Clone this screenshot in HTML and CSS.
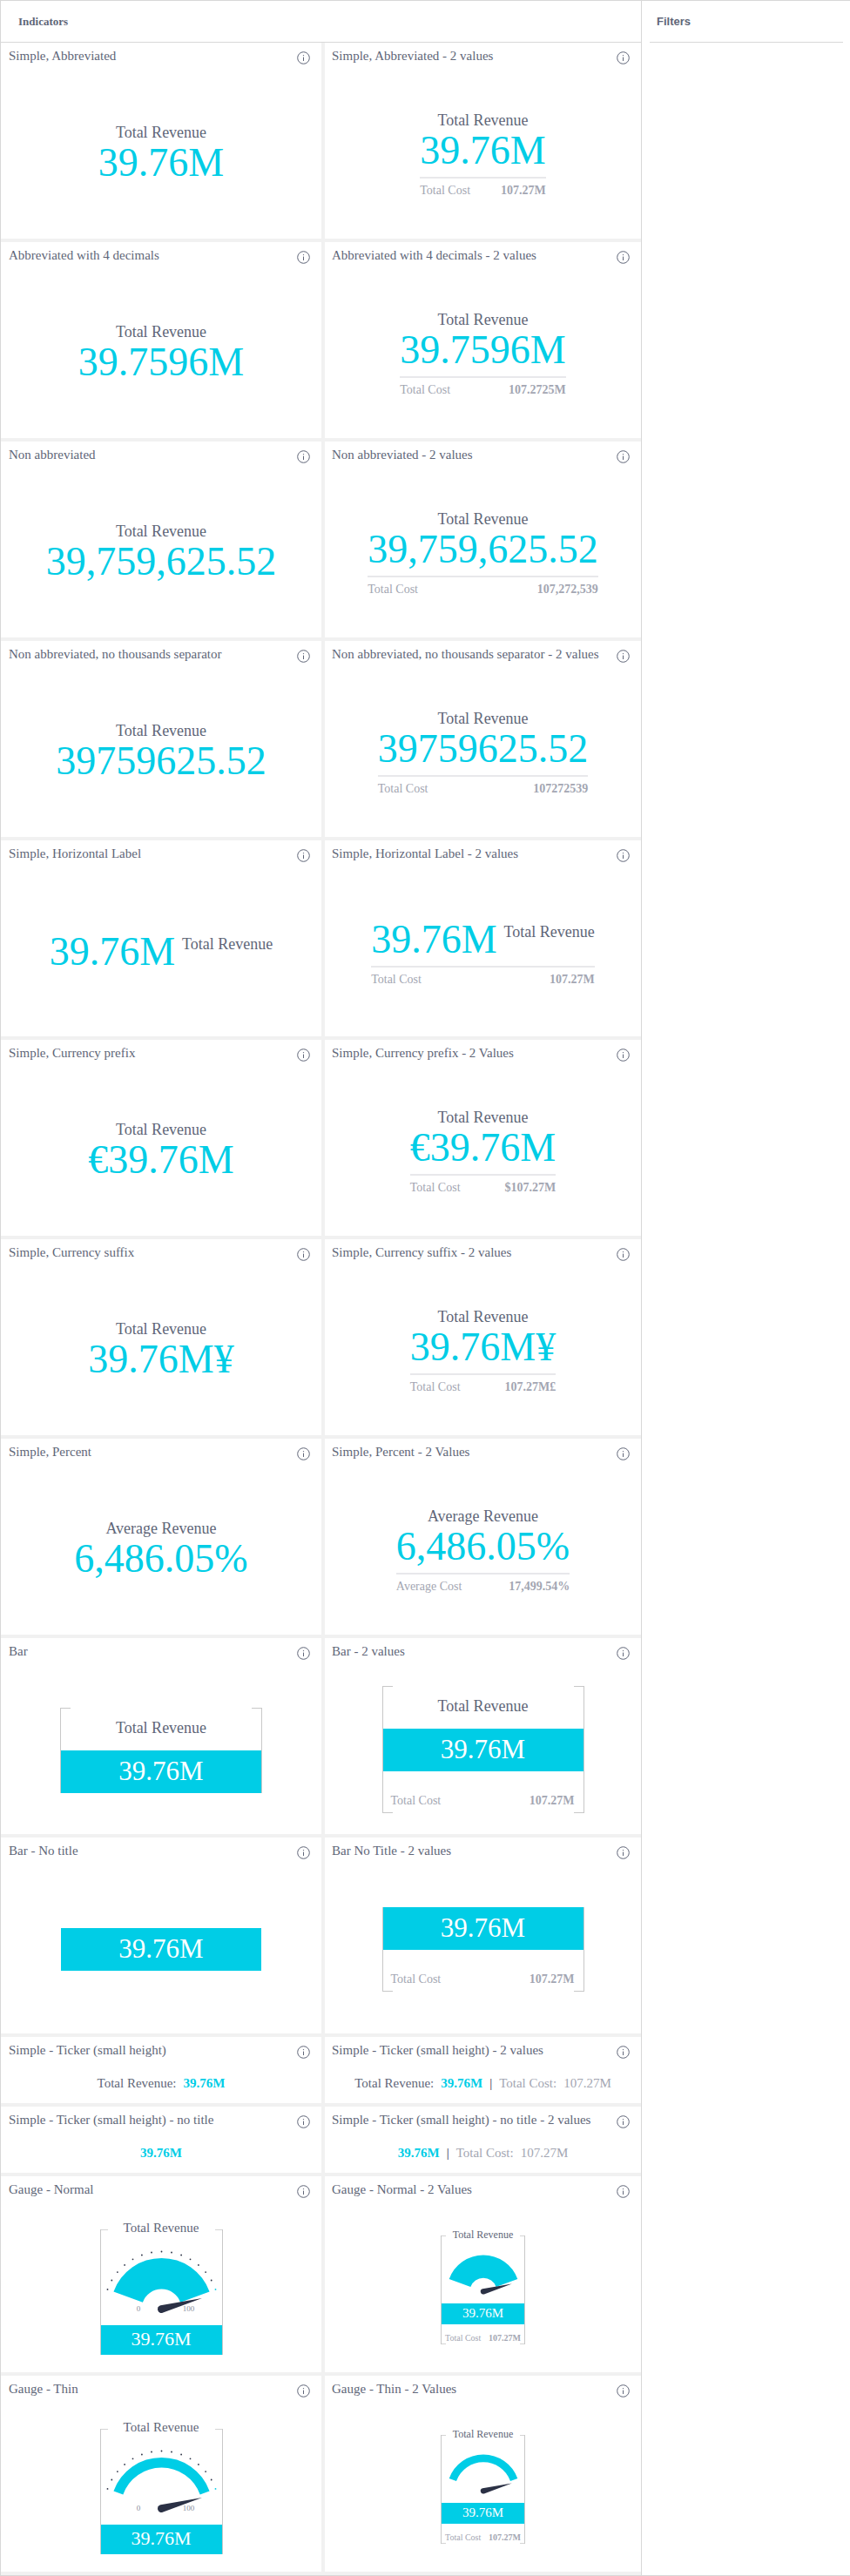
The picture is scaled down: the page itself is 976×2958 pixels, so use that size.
FILE: index.html
```html
<!DOCTYPE html>
<html lang="en">
<head>
    <meta charset="UTF-8">
    <title>Indicators</title>
    <link rel="stylesheet" href="styles.css">
</head>
<body>
    <svg class="defs" width="0" height="0">
        <symbol id="info" viewBox="0 0 15 15">
            <circle cx="7.5" cy="7.5" r="6.8" fill="none" stroke="currentColor" stroke-width="1"/>
            <path d="M7.5 6.6v4.4" stroke="currentColor" stroke-width="1"/>
            <circle cx="7.5" cy="4.6" r=".7" fill="currentColor"/>
        </symbol>
        <symbol id="ticks" viewBox="0 0 139 110">
            <g fill="#2b3145">
                <circle cx="7.5" cy="68.9" r=".9"/><circle cx="12.3" cy="58.5" r=".9"/>
                <circle cx="18.9" cy="49.1" r=".9"/><circle cx="27.1" cy="40.9" r=".9"/>
                <circle cx="36.5" cy="34.3" r=".9"/><circle cx="46.9" cy="29.5" r=".9"/>
                <circle cx="58" cy="26.5" r=".9"/><circle cx="69.5" cy="25.5" r=".9"/>
                <circle cx="81" cy="26.5" r=".9"/><circle cx="92.1" cy="29.5" r=".9"/>
                <circle cx="102.5" cy="34.3" r=".9"/><circle cx="111.9" cy="40.9" r=".9"/>
                <circle cx="120.1" cy="49.1" r=".9"/><circle cx="126.7" cy="58.5" r=".9"/>
            </g>
            <circle cx="131.5" cy="68.9" r=".9" fill="#00cde6"/>
        </symbol>
    </svg>

    <div class="page">
        <main class="main">
            <header class="main-head">Indicators</header>
            <div class="grid">

                <section class="card">
                    <div class="card-title"><span>Simple, Abbreviated</span><svg class="info"><use href="#info"/></svg></div>
                    <div class="card-body">
                        <div class="kpi">
                            <div class="kpi-label">Total Revenue</div>
                            <div class="kpi-value">39.76M</div>
                        </div>
                    </div>
                </section>
                <section class="card">
                    <div class="card-title"><span>Simple, Abbreviated - 2 values</span><svg class="info"><use href="#info"/></svg></div>
                    <div class="card-body">
                        <div class="kpi kpi-two">
                            <div class="kpi-label">Total Revenue</div>
                            <div class="kpi-value">39.76M</div>
                            <div class="kpi-rule"></div>
                            <div class="kpi-sub"><span>Total Cost</span><b>107.27M</b></div>
                        </div>
                    </div>
                </section>

                <section class="card">
                    <div class="card-title"><span>Abbreviated with 4 decimals</span><svg class="info"><use href="#info"/></svg></div>
                    <div class="card-body">
                        <div class="kpi">
                            <div class="kpi-label">Total Revenue</div>
                            <div class="kpi-value">39.7596M</div>
                        </div>
                    </div>
                </section>
                <section class="card">
                    <div class="card-title"><span>Abbreviated with 4 decimals - 2 values</span><svg class="info"><use href="#info"/></svg></div>
                    <div class="card-body">
                        <div class="kpi kpi-two">
                            <div class="kpi-label">Total Revenue</div>
                            <div class="kpi-value">39.7596M</div>
                            <div class="kpi-rule"></div>
                            <div class="kpi-sub"><span>Total Cost</span><b>107.2725M</b></div>
                        </div>
                    </div>
                </section>

                <section class="card">
                    <div class="card-title"><span>Non abbreviated</span><svg class="info"><use href="#info"/></svg></div>
                    <div class="card-body">
                        <div class="kpi">
                            <div class="kpi-label">Total Revenue</div>
                            <div class="kpi-value">39,759,625.52</div>
                        </div>
                    </div>
                </section>
                <section class="card">
                    <div class="card-title"><span>Non abbreviated - 2 values</span><svg class="info"><use href="#info"/></svg></div>
                    <div class="card-body">
                        <div class="kpi kpi-two">
                            <div class="kpi-label">Total Revenue</div>
                            <div class="kpi-value">39,759,625.52</div>
                            <div class="kpi-rule"></div>
                            <div class="kpi-sub"><span>Total Cost</span><b>107,272,539</b></div>
                        </div>
                    </div>
                </section>

                <section class="card">
                    <div class="card-title"><span>Non abbreviated, no thousands separator</span><svg class="info"><use href="#info"/></svg></div>
                    <div class="card-body">
                        <div class="kpi">
                            <div class="kpi-label">Total Revenue</div>
                            <div class="kpi-value">39759625.52</div>
                        </div>
                    </div>
                </section>
                <section class="card">
                    <div class="card-title"><span>Non abbreviated, no thousands separator - 2 values</span><svg class="info"><use href="#info"/></svg></div>
                    <div class="card-body">
                        <div class="kpi kpi-two">
                            <div class="kpi-label">Total Revenue</div>
                            <div class="kpi-value">39759625.52</div>
                            <div class="kpi-rule"></div>
                            <div class="kpi-sub"><span>Total Cost</span><b>107272539</b></div>
                        </div>
                    </div>
                </section>

                <section class="card">
                    <div class="card-title"><span>Simple, Horizontal Label</span><svg class="info"><use href="#info"/></svg></div>
                    <div class="card-body">
                        <div class="kpi">
                            <div class="kpi-row">
                                <div class="kpi-value">39.76M</div>
                                <div class="kpi-label">Total Revenue</div>
                            </div>
                        </div>
                    </div>
                </section>
                <section class="card">
                    <div class="card-title"><span>Simple, Horizontal Label - 2 values</span><svg class="info"><use href="#info"/></svg></div>
                    <div class="card-body">
                        <div class="kpi kpi-two">
                            <div class="kpi-row">
                                <div class="kpi-value">39.76M</div>
                                <div class="kpi-label">Total Revenue</div>
                            </div>
                            <div class="kpi-rule"></div>
                            <div class="kpi-sub"><span>Total Cost</span><b>107.27M</b></div>
                        </div>
                    </div>
                </section>

                <section class="card">
                    <div class="card-title"><span>Simple, Currency prefix</span><svg class="info"><use href="#info"/></svg></div>
                    <div class="card-body">
                        <div class="kpi">
                            <div class="kpi-label">Total Revenue</div>
                            <div class="kpi-value">€39.76M</div>
                        </div>
                    </div>
                </section>
                <section class="card">
                    <div class="card-title"><span>Simple, Currency prefix - 2 Values</span><svg class="info"><use href="#info"/></svg></div>
                    <div class="card-body">
                        <div class="kpi kpi-two">
                            <div class="kpi-label">Total Revenue</div>
                            <div class="kpi-value">€39.76M</div>
                            <div class="kpi-rule"></div>
                            <div class="kpi-sub"><span>Total Cost</span><b>$107.27M</b></div>
                        </div>
                    </div>
                </section>

                <section class="card">
                    <div class="card-title"><span>Simple, Currency suffix</span><svg class="info"><use href="#info"/></svg></div>
                    <div class="card-body">
                        <div class="kpi">
                            <div class="kpi-label">Total Revenue</div>
                            <div class="kpi-value">39.76M¥</div>
                        </div>
                    </div>
                </section>
                <section class="card">
                    <div class="card-title"><span>Simple, Currency suffix - 2 values</span><svg class="info"><use href="#info"/></svg></div>
                    <div class="card-body">
                        <div class="kpi kpi-two">
                            <div class="kpi-label">Total Revenue</div>
                            <div class="kpi-value">39.76M¥</div>
                            <div class="kpi-rule"></div>
                            <div class="kpi-sub"><span>Total Cost</span><b>107.27M£</b></div>
                        </div>
                    </div>
                </section>

                <section class="card">
                    <div class="card-title"><span>Simple, Percent</span><svg class="info"><use href="#info"/></svg></div>
                    <div class="card-body">
                        <div class="kpi">
                            <div class="kpi-label">Average Revenue</div>
                            <div class="kpi-value">6,486.05%</div>
                        </div>
                    </div>
                </section>
                <section class="card">
                    <div class="card-title"><span>Simple, Percent - 2 Values</span><svg class="info"><use href="#info"/></svg></div>
                    <div class="card-body">
                        <div class="kpi kpi-two">
                            <div class="kpi-label">Average Revenue</div>
                            <div class="kpi-value">6,486.05%</div>
                            <div class="kpi-rule"></div>
                            <div class="kpi-sub"><span>Average Cost</span><b>17,499.54%</b></div>
                        </div>
                    </div>
                </section>

                <section class="card">
                    <div class="card-title"><span>Bar</span><svg class="info"><use href="#info"/></svg></div>
                    <div class="card-body">
                        <div class="bar-box bar-box-short">
                            <div class="bar-label">Total Revenue</div>
                            <div class="bar-value">39.76M</div>
                        </div>
                    </div>
                </section>
                <section class="card">
                    <div class="card-title"><span>Bar - 2 values</span><svg class="info"><use href="#info"/></svg></div>
                    <div class="card-body">
                        <div class="bar-box">
                            <div class="bar-label">Total Revenue</div>
                            <div class="bar-value">39.76M</div>
                            <div class="bar-sub"><span>Total Cost</span><b>107.27M</b></div>
                        </div>
                    </div>
                </section>

                <section class="card">
                    <div class="card-title"><span>Bar - No title</span><svg class="info"><use href="#info"/></svg></div>
                    <div class="card-body">
                        <div class="bar-box bar-box-plain">
                            <div class="bar-value">39.76M</div>
                        </div>
                    </div>
                </section>
                <section class="card">
                    <div class="card-title"><span>Bar No Title - 2 values</span><svg class="info"><use href="#info"/></svg></div>
                    <div class="card-body">
                        <div class="bar-box">
                            <div class="bar-value">39.76M</div>
                            <div class="bar-sub"><span>Total Cost</span><b>107.27M</b></div>
                        </div>
                    </div>
                </section>

                <section class="card card-ticker">
                    <div class="card-title"><span>Simple - Ticker (small height)</span><svg class="info"><use href="#info"/></svg></div>
                    <div class="card-body ticker">
                        <span>Total Revenue:</span><b class="ticker-value">39.76M</b>
                    </div>
                </section>
                <section class="card card-ticker">
                    <div class="card-title"><span>Simple - Ticker (small height) - 2 values</span><svg class="info"><use href="#info"/></svg></div>
                    <div class="card-body ticker">
                        <span>Total Revenue:</span><b class="ticker-value">39.76M</b><span class="ticker-sep">|</span><span class="ticker-muted">Total Cost:</span><span class="ticker-muted">107.27M</span>
                    </div>
                </section>

                <section class="card card-ticker">
                    <div class="card-title"><span>Simple - Ticker (small height) - no title</span><svg class="info"><use href="#info"/></svg></div>
                    <div class="card-body ticker">
                        <b class="ticker-value">39.76M</b>
                    </div>
                </section>
                <section class="card card-ticker">
                    <div class="card-title"><span>Simple - Ticker (small height) - no title - 2 values</span><svg class="info"><use href="#info"/></svg></div>
                    <div class="card-body ticker">
                        <b class="ticker-value">39.76M</b><span class="ticker-sep">|</span><span class="ticker-muted">Total Cost:</span><span class="ticker-muted">107.27M</span>
                    </div>
                </section>

                <section class="card">
                    <div class="card-title"><span>Gauge - Normal</span><svg class="info"><use href="#info"/></svg></div>
                    <div class="card-body">
                        <div class="gauge">
                            <div class="gauge-title">Total Revenue</div>
                            <div class="gauge-frame">
                                <svg class="gauge-dial" viewBox="0 0 139 110">
                                    <use href="#ticks"/>
                                    <path d="M14.43 71.46A58.6 58.6 0 0 1 124.57 71.46L91.11 83.63A23 23 0 0 0 47.89 83.63Z" fill="#00cde6"/>
                                    <text x="43" y="94" class="gauge-tick" text-anchor="middle">0</text>
                                    <text x="100.5" y="94" class="gauge-tick" text-anchor="middle">100</text>
                                    <path d="M68.33 87.15L116 79L70.67 95.85A4.5 4.5 0 0 1 68.33 87.15Z" fill="#2b3145"/>
                                </svg>
                                <div class="gauge-value">39.76M</div>
                            </div>
                        </div>
                    </div>
                </section>
                <section class="card">
                    <div class="card-title"><span>Gauge - Normal - 2 Values</span><svg class="info"><use href="#info"/></svg></div>
                    <div class="card-body">
                        <div class="gauge gauge-small">
                            <div class="gauge-title">Total Revenue</div>
                            <div class="gauge-frame">
                                <svg class="gauge-dial" viewBox="0 0 95 78">
                                    <path d="M8.72 50A41.8 41.8 0 0 1 87.28 50L62.66 58.96A15.6 15.6 0 0 0 33.34 58.96Z" fill="#00cde6"/>
                                    <path d="M47.15 61.2L80.7 55.4L48.85 67.4A3.2 3.2 0 0 1 47.15 61.2Z" fill="#2b3145"/>
                                </svg>
                                <div class="gauge-value">39.76M</div>
                                <div class="gauge-sub"><span>Total Cost</span><b>107.27M</b></div>
                            </div>
                        </div>
                    </div>
                </section>

                <section class="card">
                    <div class="card-title"><span>Gauge - Thin</span><svg class="info"><use href="#info"/></svg></div>
                    <div class="card-body">
                        <div class="gauge">
                            <div class="gauge-title">Total Revenue</div>
                            <div class="gauge-frame">
                                <svg class="gauge-dial" viewBox="0 0 139 110">
                                    <use href="#ticks"/>
                                    <path d="M14.43 71.46A58.6 58.6 0 0 1 124.57 71.46L113.67 75.43A47 47 0 0 0 25.33 75.43Z" fill="#00cde6"/>
                                    <text x="43" y="94" class="gauge-tick" text-anchor="middle">0</text>
                                    <text x="100.5" y="94" class="gauge-tick" text-anchor="middle">100</text>
                                    <path d="M68.33 87.15L116 79L70.67 95.85A4.5 4.5 0 0 1 68.33 87.15Z" fill="#2b3145"/>
                                </svg>
                                <div class="gauge-value">39.76M</div>
                            </div>
                        </div>
                    </div>
                </section>
                <section class="card">
                    <div class="card-title"><span>Gauge - Thin - 2 Values</span><svg class="info"><use href="#info"/></svg></div>
                    <div class="card-body">
                        <div class="gauge gauge-small">
                            <div class="gauge-title">Total Revenue</div>
                            <div class="gauge-frame">
                                <svg class="gauge-dial" viewBox="0 0 95 78">
                                    <path d="M8.72 50A41.8 41.8 0 0 1 87.28 50L79 53.01A33 33 0 0 0 17 53.01Z" fill="#00cde6"/>
                                    <path d="M47.15 61.2L80.7 55.4L48.85 67.4A3.2 3.2 0 0 1 47.15 61.2Z" fill="#2b3145"/>
                                </svg>
                                <div class="gauge-value">39.76M</div>
                                <div class="gauge-sub"><span>Total Cost</span><b>107.27M</b></div>
                            </div>
                        </div>
                    </div>
                </section>

            </div>
        </main>
        <aside class="side">
            <div class="side-head">Filters</div>
        </aside>
    </div>
</body>
</html>
```

FILE: styles.css
```css
body {
    margin: 0;
    font-family: 'Liberation Serif', serif;
    color: #606678;
    background: white;
}
.defs {
    display: block;
    height: 0;
}
.page {
    display: flex;
    box-sizing: border-box;
    height: 2958px;
    border-top: 1px solid #d8d8d8;
    border-bottom: 1px solid #d8d8d8;
}
.main {
    box-sizing: border-box;
    width: 737px;
    flex: none;
    border-left: 1px solid #d8d8d8;
    border-right: 1px solid #d8d8d8;
    background: #f1f1f1;
}
.main-head {
    box-sizing: border-box;
    height: 48px;
    padding-left: 20px;
    line-height: 47px;
    font-size: 13px;
    font-weight: bold;
    background: white;
    border-bottom: 1px solid #d8d8d8;
}
.grid {
    display: grid;
    grid-template-columns: 368px 363px;
    gap: 4px;
}
.card {
    display: flex;
    flex-direction: column;
    height: 225px;
    background: white;
}
.card-ticker {
    height: 76px;
}
.card-title {
    display: flex;
    justify-content: space-between;
    box-sizing: border-box;
    height: 31px;
    padding: 5px 13px 0 9px;
    font-size: 15px;
    line-height: 20px;
}
.card:nth-child(even) .card-title {
    padding-left: 8px;
}
.info {
    width: 15px;
    height: 15px;
    margin-top: 5px;
    flex: none;
}
.card-body {
    flex: 1;
    display: flex;
    align-items: center;
    justify-content: center;
}

/* plain values */
.kpi {
    display: flex;
    flex-direction: column;
    padding-bottom: 2px;
}
.kpi-two {
    padding-top: 3px;
}
.kpi-label {
    font-size: 18px;
    line-height: 20px;
    text-align: center;
    white-space: nowrap;
}
.kpi-value {
    margin-top: 2px;
    font-size: 46px;
    line-height: 46px;
    color: #00cde6;
    white-space: nowrap;
}
.kpi-row {
    display: flex;
    align-items: center;
    gap: 8px;
}
.kpi-row .kpi-label {
    margin-bottom: 16px;
}
.kpi-rule {
    height: 2px;
    margin-top: 7px;
    background: #e8e8eb;
}
.kpi-sub {
    display: flex;
    justify-content: space-between;
    margin-top: 6px;
    font-size: 14px;
    line-height: 16px;
    color: #a3a6b2;
}

/* bar boxes, side borders with short corners */
.bar-box {
    --line: linear-gradient(#c8c8c8, #c8c8c8);
    box-sizing: border-box;
    width: 232px;
    border-left: 1px solid #c8c8c8;
    border-right: 1px solid #c8c8c8;
    background:
        var(--line) left top / 11px 1px no-repeat,
        var(--line) right top / 11px 1px no-repeat,
        var(--line) left bottom / 11px 1px no-repeat,
        var(--line) right bottom / 11px 1px no-repeat;
}
.bar-box-short {
    margin-top: 2px;
}
.bar-box-plain {
    border-color: transparent;
}
.bar-label {
    height: 49px;
    font-size: 18px;
    line-height: 47px;
    text-align: center;
}
.bar-value {
    height: 49px;
    font-size: 31px;
    line-height: 47px;
    text-align: center;
    color: white;
    background: #00cde6;
}
.bar-sub {
    display: flex;
    justify-content: space-between;
    box-sizing: border-box;
    height: 48px;
    padding: 26px 10px 0 9px;
    font-size: 14px;
    line-height: 16px;
    color: #a3a6b2;
}

/* ticker */
.ticker {
    gap: 8px;
    font-size: 15px;
}
.ticker-value {
    color: #00cde6;
}
.ticker-muted {
    color: #a3a6b2;
}
.ticker-sep {
    color: #2b3145;
}

/* gauges */
.gauge {
    display: flex;
    flex-direction: column;
    width: 141px;
    padding-bottom: 2px;
}
.gauge-title {
    margin-bottom: -8px;
    font-size: 15px;
    line-height: 20px;
    text-align: center;
}
.gauge-frame {
    --line: linear-gradient(#d4d4d4, #d4d4d4);
    --corner: 8px;
    box-sizing: border-box;
    border-left: 1px solid #c8c8c8;
    border-right: 1px solid #c8c8c8;
    background:
        var(--line) left top / var(--corner) 1px no-repeat,
        var(--line) right top / var(--corner) 1px no-repeat,
        var(--line) left bottom / var(--corner) 1px no-repeat,
        var(--line) right bottom / var(--corner) 1px no-repeat;
}
.gauge-dial {
    display: block;
    width: 100%;
    height: 110px;
}
.gauge-tick {
    font-size: 9px;
    fill: #8a8e9c;
}
.gauge-value {
    height: 34px;
    font-size: 22px;
    line-height: 32px;
    text-align: center;
    color: white;
    background: #00cde6;
}
.gauge-small {
    width: 97px;
    padding-bottom: 3px;
}
.gauge-small .gauge-title {
    margin-bottom: -6px;
    font-size: 12px;
    line-height: 14px;
}
.gauge-small .gauge-frame {
    --corner: 5px;
}
.gauge-small .gauge-dial {
    height: 78px;
}
.gauge-small .gauge-value {
    height: 24px;
    font-size: 15px;
    line-height: 23px;
}
.gauge-sub {
    display: flex;
    justify-content: space-between;
    box-sizing: border-box;
    height: 23px;
    padding: 10px 4px 0;
    font-size: 10px;
    line-height: 12px;
    color: #a3a6b2;
}

/* filters panel */
.side {
    flex: 1;
    padding: 0 8px 0 9px;
}
.side-head {
    box-sizing: border-box;
    height: 48px;
    padding-left: 8px;
    line-height: 47px;
    font-family: 'Liberation Sans', sans-serif;
    font-size: 13px;
    font-weight: bold;
    border-bottom: 1px solid #d8d8d8;
}
```
